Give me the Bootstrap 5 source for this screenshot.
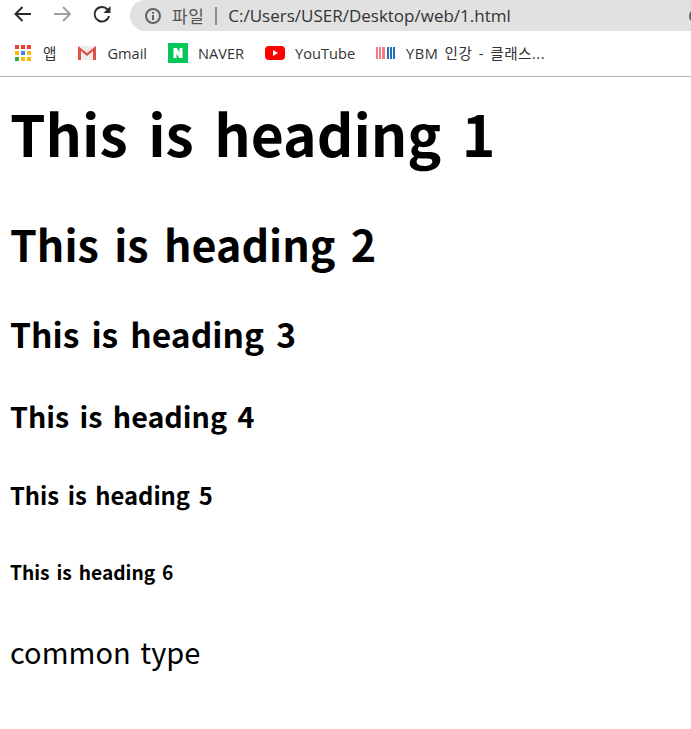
<!DOCTYPE html>
<html lang="ko">
<head>
<meta charset="utf-8">
<title>1.html</title>
<link href="https://cdn.jsdelivr.net/npm/bootstrap@5.3.0/dist/css/bootstrap.min.css" rel="stylesheet">
<style>
html,body{height:729px;overflow:hidden}
body{background:#fff;color:#000;font-family:"Noto Sans CJK KR","Noto Sans",sans-serif}
.tool-row{height:37px;padding-left:12px;padding-top:4px}
.nav-ico{width:20px;height:20px;flex:none}
.fwd-ico{margin-left:20px}
.rel-ico{margin-left:20px}
.addr{margin-left:18px;height:31px;margin-top:-4px;flex:1;background:#e1e1e1;border-radius:16px 0 0 16px;padding-left:13px;font-size:17px;color:#555;white-space:nowrap;overflow:hidden}
.addr-path{color:#333;margin-left:11px;font-family:"Open Sans","Noto Sans",sans-serif;font-size:17px}
.addr-sep{margin-left:11px;width:2px;height:18px;background:#8a8a8a}
.addr-lab{margin-left:9px;letter-spacing:.5px}
.addr-end{margin-left:auto;margin-right:-16px}
.marks{height:40px;padding-left:15px;padding-bottom:6px;border-bottom:1px solid #b4b4b4;font-size:14.6px;color:#333;white-space:nowrap;font-family:"Open Sans","Noto Sans CJK KR",sans-serif}
.mark-ico{width:20px;height:20px;flex:none;margin-right:10px}
.mark-app{width:17px;height:17px;margin-right:11px}
.mark-item{margin-right:21px}
.wide-lab{word-spacing:2px;letter-spacing:.5px}
.page{padding:0 10px}
.page h1,.page h2,.page h3,.page h4,.page h5,.page h6{font-weight:700;line-height:1.3;color:#000;margin:0;word-spacing:.08em}
.page h1{font-size:57px;margin-top:18px}
.page h2{font-size:43px;margin-top:47px}
.page h3{font-size:33.6px;margin-top:40px}
.page h4{font-size:28.7px;margin-top:41px}
.page h5{font-size:23.8px;margin-top:46px}
.page h6{font-size:19.2px;margin-top:49px}
.plain{font-size:29px;margin:48px 0 0;line-height:1.3;word-spacing:.05em}
</style>
</head>
<body>
<div class="tool-row d-flex align-items-start">
  <svg class="nav-ico" viewBox="0 0 20 20" fill="none" stroke="#2b2b2b" stroke-width="2"><path d="M19 10H3.500M10.500 3l-7 7 7 7"/></svg>
  <svg class="nav-ico fwd-ico" viewBox="0 0 20 20" fill="none" stroke="#a0a0a0" stroke-width="2"><path d="M2 10h16M11 3l7 7-7 7"/></svg>
  <svg class="nav-ico rel-ico" viewBox="0 0 20 20" fill="none" stroke="#2b2b2b" stroke-width="2"><path d="M17 12A7.300 7.300 0 1 1 15.500 5.500"/><path d="M18.500 2v7h-7z" fill="#2b2b2b" stroke="none"/></svg>
  <div class="addr d-flex align-items-center">
    <svg class="nav-ico" viewBox="0 0 20 20" fill="none" stroke="#5f6368" stroke-width="2"><circle cx="10" cy="10" r="7"/><path d="M10 9v5M10 6v1.800"/></svg>
    <span class="addr-lab">파일</span><span class="addr-sep"></span><span class="addr-path">C:/Users/USER/Desktop/web/1.html</span>
    <svg class="nav-ico addr-end" viewBox="0 0 20 20" fill="none" stroke="#5f6368" stroke-width="2"><circle cx="10" cy="10" r="7"/></svg>
  </div>
</div>
<div class="marks d-flex align-items-center">
  <span class="mark-item d-flex align-items-center">
    <svg class="mark-ico mark-app" viewBox="0 0 17 17"><rect x="0" y="0" width="4" height="4" fill="#ea4335"/><rect x="6" y="0" width="4" height="4" fill="#ea4335"/><rect x="12" y="0" width="4" height="4" fill="#ea4335"/><rect x="0" y="6" width="4" height="4" fill="#fbbc05"/><rect x="6" y="6" width="4" height="4" fill="#4285f4"/><rect x="12" y="6" width="4" height="4" fill="#fbbc05"/><rect x="0" y="12" width="4" height="4" fill="#34a853"/><rect x="6" y="12" width="4" height="4" fill="#fbbc05"/><rect x="12" y="12" width="4" height="4" fill="#fbbc05"/></svg>앱
  </span>
  <span class="mark-item d-flex align-items-center">
    <svg class="mark-ico" viewBox="0 0 20 20"><path d="M1 3h18v14H1z" fill="#ececec"/><path d="M1 17V3l9 7 9-7v14h-3V8l-6 5-6-5v9z" fill="#de5246"/></svg>Gmail
  </span>
  <span class="mark-item d-flex align-items-center">
    <svg class="mark-ico" viewBox="0 0 20 20"><rect width="20" height="20" fill="#03c75a"/><path d="M5.500 5h3.200l2.800 4.200V5h3v10h-3.200L8.500 10.800V15h-3z" fill="#fff"/></svg>NAVER
  </span>
  <span class="mark-item d-flex align-items-center">
    <svg class="mark-ico" viewBox="0 0 20 20"><rect y="3" width="20" height="14" rx="4" fill="#f00"/><path d="M8 7l5 3-5 3z" fill="#fff"/></svg>YouTube
  </span>
  <span class="d-flex align-items-center">
    <svg class="mark-ico" viewBox="0 0 20 20"><g fill="#f27b85"><rect x="0" y="4" width="2" height="12"/><rect x="3" y="4" width="2" height="12"/><rect x="6" y="4" width="3" height="12"/></g><g fill="#1e6fb8"><rect x="11" y="4" width="2" height="12"/><rect x="14" y="4" width="2" height="12"/><rect x="17" y="4" width="2" height="12"/></g></svg><span class="wide-lab">YBM 인강 - 클래스...</span>
  </span>
</div>
<div class="page">
  <h1>This is heading 1</h1>
  <h2>This is heading 2</h2>
  <h3>This is heading 3</h3>
  <h4>This is heading 4</h4>
  <h5>This is heading 5</h5>
  <h6>This is heading 6</h6>
  <p class="plain">common type</p>
</div>
</body>
</html>
